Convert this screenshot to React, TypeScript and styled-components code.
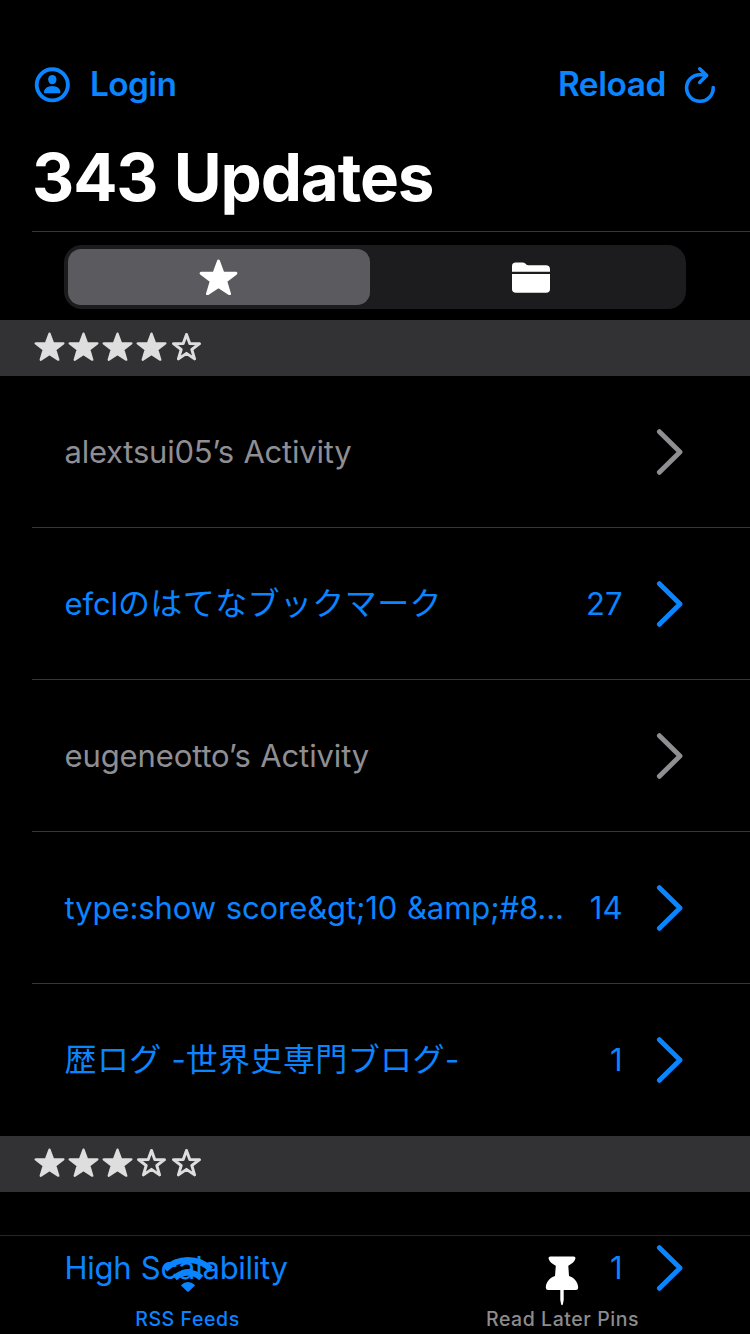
import React from "react";
import styled, { createGlobalStyle } from "styled-components";

const BLUE = "#0a84ff";
const GRAY = "#8e8e93";

const GlobalStyle = createGlobalStyle`
  * { box-sizing: border-box; }
  body { margin: 0; background: #000; overflow: hidden; }
`;

const Screen = styled.main`
  position: relative;
  display: flex;
  flex-direction: column;
  width: 750px;
  height: 1334px;
  overflow: hidden;
  background: #000;
  color: #fff;
  font-family: Inter, "Noto Sans CJK JP", sans-serif;
  svg { display: block; flex: none; }
`;

const Text = styled.span<{ $tracking?: number }>`
  white-space: pre;
  letter-spacing: ${(p) => p.$tracking ?? 0}px;
`;

const NavBar = styled.nav`
  display: flex;
  flex: none;
  justify-content: space-between;
  height: 128px;
  padding: 64px 34px 0 34px;
`;

const NavButton = styled.button<{ $gap: number }>`
  display: flex;
  align-items: center;
  gap: ${(p) => p.$gap}px;
  height: 41px;
  padding: 0;
  border: 0;
  background: none;
  color: ${BLUE};
  font: 600 33.4px/41px Inter, sans-serif;
`;

const Title = styled.h1`
  flex: none;
  height: 104px;
  margin: 0 0 0 32px;
  padding-top: 10px;
  border-bottom: 1px solid #38383a;
  font-size: 65.5px;
  font-weight: 700;
  line-height: 80px;
  word-spacing: 2px;
`;

const Segments = styled.div`
  display: flex;
  flex: none;
  width: 622px;
  height: 64px;
  margin: 13px 0 11px 64px;
  padding: 4px;
  border-radius: 18px;
  background: #1c1c1e;
`;

const Segment = styled.button<{ $selected?: boolean }>`
  display: flex;
  align-items: center;
  justify-content: center;
  width: ${(p) => (p.$selected ? 302 : 312)}px;
  padding: ${(p) => (p.$selected ? "0 1px 0 0" : "0 0 0 10px")};
  border: 0;
  border-radius: 13px;
  background: ${(p) => (p.$selected ? "#5b5a5f" : "transparent")};
  color: #fff;
`;

const SectionHeader = styled.header`
  display: flex;
  flex: none;
  align-items: center;
  gap: 3px;
  height: 56px;
  padding: 0 0 2px 34px;
  background: #323234;
  color: #dedede;
  svg:last-child { margin-left: 1px; }
`;

const Feed = styled.article<{ $unread: boolean }>`
  display: flex;
  flex: none;
  align-items: center;
  height: 152px;
  margin-left: 32px;
  padding: 0 67px 0 32.5px;
  border-bottom: 1px solid #38383a;
  color: ${(p) => (p.$unread ? BLUE : GRAY)};
  font-size: 31px;
  line-height: 40px;
  word-spacing: 1px;
  &:last-child { border-bottom-color: transparent; }
`;

const FeedList = styled.div`
  display: flex;
  flex: none;
  flex-direction: column;
`;

const FeedName = styled(Text)`
  flex: 1;
`;

const Kana = styled.span`
  font-size: 32px;
  letter-spacing: 0.4px;
`;

const Count = styled(Text)`
  margin-right: 33.5px;
`;

const TabBar = styled.footer`
  position: absolute;
  left: 0;
  right: 0;
  bottom: 0;
  display: grid;
  grid-template-columns: 1fr 1fr;
  height: 99px;
  border-top: 1px solid #262628;
`;

const Tab = styled.button<{ $active?: boolean }>`
  display: flex;
  flex-direction: column;
  align-items: center;
  padding: 20px 0 0;
  border: 0;
  background: none;
  color: ${(p) => (p.$active ? BLUE : "#8c8c8c")};
  font: 500 19.5px/24px Inter, sans-serif;
`;

const TabIcon = styled.div<{ $shift?: number }>`
  height: 51px;
  margin-right: ${(p) => p.$shift ?? 0}px;
`;

const STAR =
  "M19 2 L23.3 13.6 L36 13.9 L26.1 21.6 L29.8 34 L19 26.9 L8.2 34 L11.9 21.6 L2 13.9 L14.7 13.6 Z";

function Star({ width, filled = true }: { width: number; filled?: boolean }) {
  return (
    <svg width={width} height={(width * 36) / 38} viewBox="0 0 38 36">
      <path
        d={filled ? STAR : "M19 3 L23 14 L35 14.3 L25.5 21.5 L28.9 33 L19 26.2 L9.1 33 L12.5 21.5 L3 14.3 L15 14 Z"}
        fill={filled ? "currentColor" : "none"}
        stroke="currentColor"
        strokeWidth={filled ? 2.8 : 3.6}
        strokeLinejoin="round"
      />
    </svg>
  );
}

function PersonIcon() {
  return (
    <svg width="36" height="36" viewBox="0 0 36 36">
      <circle cx="18.3" cy="17.8" r="15.6" fill="none" stroke={BLUE} strokeWidth="3.9" />
      <ellipse cx="18.3" cy="12.6" rx="4.2" ry="4.7" fill={BLUE} />
      <path d="M10 25.2 C10 21.8 13.5 19 18.3 19 C23 19 26.4 21.8 26.4 25.2 Q26.4 26.2 25.4 26.2 H11 Q10 26.2 10 25.2 Z" fill={BLUE} />
    </svg>
  );
}

function ReloadIcon() {
  return (
    <svg width="32" height="38" viewBox="0 0 32 38" fill="none" stroke={BLUE} strokeWidth="3.6" strokeLinecap="round" strokeLinejoin="round">
      <path d="M29.2 21.6 A13.3 13.3 0 1 1 16 8.7 Q19 8.6 22.4 9.4" />
      <path d="M15.7 2.8 L22.5 9.4 L15.7 16.4" />
    </svg>
  );
}

function FolderIcon() {
  return (
    <svg width="38" height="31" viewBox="0 0 38 31" fill="#fff">
      <path d="M0 9.7 V4 Q0 0.4 3.7 0.4 H10.5 Q12.2 0.4 13.3 1.6 L14.2 2.6 Q14.9 3.3 16.2 3.3 H33.8 Q38 3.3 38 7.3 V9.7 Z" />
      <path d="M0 12 H38 V27 Q38 30.8 34 30.8 H4 Q0 30.8 0 27 Z" />
    </svg>
  );
}

function Chevron() {
  return (
    <svg width="27" height="46" viewBox="0 0 27 46" fill="none" stroke="currentColor" strokeWidth="4.9" strokeLinecap="round" strokeLinejoin="round">
      <path d="M3.4 2.7 L24 23 L3.4 43.3" />
    </svg>
  );
}

function WifiIcon() {
  return (
    <svg width="50" height="36" viewBox="0 0 50 36" fill="none" stroke={BLUE} strokeWidth="6">
      <path d="M2.2 13.4 A32.5 32.5 0 0 1 47.8 13.4" />
      <path d="M11.8 22 A19 19 0 0 1 38.2 22" />
      <path d="M17.8 29.2 Q25 22.6 32.2 29.2 L26 35.2 Q25 36.2 24 35.2 Z" fill={BLUE} stroke="none" />
    </svg>
  );
}

function PinIcon() {
  return (
    <svg width="34" height="50" viewBox="0 0 34 50" fill="#fff">
      <path d="M5.2 0.5 H28.8 Q30.7 0.5 30.4 2.6 C29.8 5.5 26.5 8.3 23.3 9.8 L24 20 C29.5 21.8 33 26.2 33.2 31.5 Q33.2 34 30.8 34 H3.2 Q0.8 34 0.8 31.5 C1 26.2 4.5 21.8 10 20 L10.8 9.8 C7.5 8.3 4.2 5.5 3.6 2.6 Q3.3 0.5 5.2 0.5 Z" />
      <path d="M15.3 33 H18.7 V44 L17.8 48.6 Q17 50 16.2 48.6 L15.3 44 Z" />
    </svg>
  );
}

type FeedData = { name: string; count?: string; tracking?: number };

const FOUR_STAR: FeedData[] = [
  { name: "alextsui05’s Activity", tracking: -0.24 },
  { name: "efclのはてなブックマーク", count: "27", tracking: -0.1 },
  { name: "eugeneotto’s Activity", tracking: -0.12 },
  { name: "type:show score&gt;10 &amp;#8...", count: "14", tracking: -0.08 },
  { name: "歴ログ -世界史専門ブログ-", count: "1" },
];

const THREE_STAR: FeedData[] = [{ name: "High Scalability", count: "1", tracking: -0.27 }];

/* Japanese runs are set slightly larger than the Latin text beside them. */
function mixedScript(name: string) {
  return name
    .split(/([\u3000-\u30ff\u4e00-\u9fff]+)/)
    .filter(Boolean)
    .map((run, i) => (/[\u3000-\u9fff]/.test(run) ? <Kana key={i}>{run}</Kana> : run));
}

function Section({ rating, feeds }: { rating: number; feeds: FeedData[] }) {
  return (
    <>
      <SectionHeader>
        {[1, 2, 3, 4, 5].map((n) => (
          <Star key={n} width={31} filled={n <= rating} />
        ))}
      </SectionHeader>
      <FeedList>
        {feeds.map((f) => (
          <Feed key={f.name} $unread={!!f.count}>
            <FeedName $tracking={f.tracking}>{mixedScript(f.name)}</FeedName>
            {f.count && <Count>{f.count}</Count>}
            <Chevron />
          </Feed>
        ))}
      </FeedList>
    </>
  );
}

export default function App() {
  return (
    <Screen>
      <GlobalStyle />
      <NavBar>
        <NavButton $gap={20}>
          <PersonIcon />
          <Text $tracking={-0.6}>Login</Text>
        </NavButton>
        <NavButton $gap={18}>
          <Text $tracking={-0.4}>Reload</Text>
          <ReloadIcon />
        </NavButton>
      </NavBar>
      <Title>
        <Text $tracking={-1.15}>343 Updates</Text>
      </Title>
      <Segments>
        <Segment $selected>
          <Star width={39} />
        </Segment>
        <Segment>
          <FolderIcon />
        </Segment>
      </Segments>
      <Section rating={4} feeds={FOUR_STAR} />
      <Section rating={3} feeds={THREE_STAR} />
      <TabBar>
        <Tab $active>
          <TabIcon>
            <WifiIcon />
          </TabIcon>
          <Text $tracking={0.6}>RSS Feeds</Text>
        </Tab>
        <Tab>
          <TabIcon $shift={1}>
            <PinIcon />
          </TabIcon>
          <Text $tracking={0.55}>Read Later Pins</Text>
        </Tab>
      </TabBar>
    </Screen>
  );
}
